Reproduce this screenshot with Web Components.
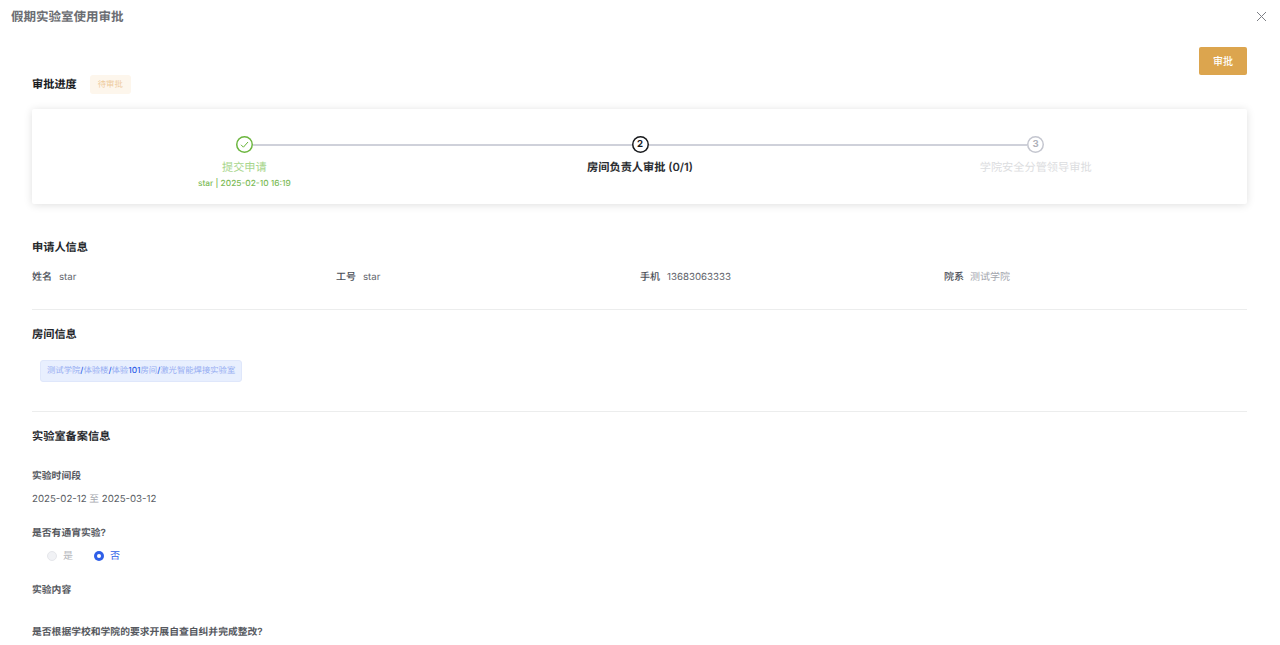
<!DOCTYPE html>
<html lang="zh">
<head>
<meta charset="utf-8">
<title>假期实验室使用审批</title>
<style>
  html, body { margin: 0; height: 100%; background: #fff; overflow: hidden; }
  body { font-family: Inter, "Noto Sans CJK SC", sans-serif; font-size: 10px; color: #4b4f58; text-rendering: geometricPrecision; }
</style>
</head>
<body>
<approval-page>
  <section-block title-text="申请人信息" style="height:70px">
    <info-row>
      <info-item label="姓名">star</info-item>
      <info-item label="工号">star</info-item>
      <info-item label="手机">13683063333</info-item>
      <info-item label="院系" muted>测试学院</info-item>
    </info-row>
  </section-block>
  <section-block title-text="房间信息" style="height:85px">
    <room-tag><span>测试学院</span><b>/</b><span>体验楼</span><b>/</b><span>体验</span><b>101</b><span>房间</span><b>/</b><span>激光智能焊接实验室</span></room-tag>
  </section-block>
  <section-block title-text="实验室备案信息" last>
    <form-field label="实验时间段" style="height:57px;margin-top:26px"><span>2025-02-12 <span style="color:#a3a6ad">至</span> 2025-03-12</span></form-field>
    <form-field label="是否有通宵实验?" style="height:57px">
      <radio-choice label="是" disabled></radio-choice>
      <radio-choice label="否" checked></radio-choice>
    </form-field>
    <form-field label="实验内容" style="height:42px"></form-field>
    <form-field label="是否根据学校和学院的要求开展自查自纠并完成整改?"></form-field>
  </section-block>
</approval-page>

<script>
class ApprovalPage extends HTMLElement {
  constructor() {
    super();
    this.attachShadow({ mode: 'open' });
    this.shadowRoot.innerHTML = `
      <style>
        :host { display: block; height: 645px; overflow: hidden; }
        header { height: 33px; display: flex; align-items: center; justify-content: space-between; padding: 0 13px 0 11px; }
        h1 { margin: 0 0 2px; font-size: 12.5px; font-weight: 600; color: #6b6d72; }
        .close { width: 11px; height: 11px; display: block; }
        main { padding: 0 33px 0 32px; }
        .actions { display: flex; justify-content: flex-end; padding-top: 14px; height: 28px; }
        button { width: 48px; height: 28px; border: 0; border-radius: 2px; background: #dca54e; color: #fff; font: inherit; font-size: 10px; font-weight: 500; padding: 0 0 2px; }
        .progress { display: flex; align-items: center; height: 19px; gap: 13px; }
        h2 { margin: 0 0 2px; font-size: 11.2px; font-weight: 600; color: #17191c; }
        .tag { width: 41px; height: 19px; line-height: 20px; text-align: center; background: #fdf6ec; border-radius: 3px; color: #eecb9c; font-size: 8.4px; }
        .card { display: flex; height: 95px; margin: 15px 0 35px; padding: 0 13.5px 0 14.5px; box-sizing: border-box; background: #fff; border-radius: 2px; box-shadow: 0 1px 8px rgba(0,0,0,.13); }
      </style>
      <header>
        <h1>假期实验室使用审批</h1>
        <svg class="close" viewBox="0 0 11 11" fill="none" stroke="#7d7f85" stroke-width="1"><path d="M1 1l9 9M10 1l-9 9"/></svg>
      </header>
      <main>
        <div class="actions"><button>审批</button></div>
        <div class="progress"><h2>审批进度</h2><span class="tag">待审批</span></div>
        <div class="card">
          <approval-step state="done" text="提交申请" sub="star | 2025-02-10 16:19" first></approval-step>
          <approval-step state="current" num="2" text="房间负责人审批 (0/1)"></approval-step>
          <approval-step state="wait" num="3" text="学院安全分管领导审批" last></approval-step>
        </div>
        <slot></slot>
      </main>`;
  }
}

class ApprovalStep extends HTMLElement {
  constructor() {
    super();
    this.attachShadow({ mode: 'open' });
  }
  connectedCallback() {
    const state = this.getAttribute('state');
    const inner = state === 'done'
      ? '<svg width="9" height="9" viewBox="0 0 9 9" fill="none" stroke="#67b437" stroke-width="1"><path d="M1 4.8l2.4 2.4L8 2"/></svg>'
      : this.getAttribute('num');
    const left = this.hasAttribute('first') ? 'none' : '';
    const right = this.hasAttribute('last') ? 'none' : '';
    const sub = this.getAttribute('sub');
    this.shadowRoot.innerHTML = `
      <style>
        :host { display: block; flex: 1 1 0; min-width: 0; text-align: center; padding-top: 27px; }
        .head { display: flex; align-items: center; height: 17px; }
        .line { flex: 1; height: 2px; background: #cfd1da; }
        .line.none { background: transparent; }
        .dot { width: 17px; height: 17px; box-sizing: border-box; border-radius: 50%; box-shadow: inset 0 0 0 1.5px var(--ring); display: flex; align-items: center; justify-content: center; font-size: 9.6px; font-weight: 700; }
        .text { margin-top: 6px; height: 16px; line-height: 16px; font-size: 11.2px; }
        .sub { margin-top: 3px; font-size: 8.35px; line-height: 12px; font-weight: 500; color: #7dbb57; }
        :host([state=done]) .dot { --ring: #6cb63f; }
        :host([state=done]) .text { color: #a9d68e; }
        :host([state=current]) .dot { --ring: #17191c; color: #17191c; }
        :host([state=current]) .text { color: #2a2c30; font-weight: 600; }
        :host([state=wait]) .dot { --ring: #c4c6cf; color: #b0b2ba; }
        :host([state=wait]) .text { color: #dcdde0; }
      </style>
      <div class="head"><span class="line ${left}"></span><span class="dot">${inner}</span><span class="line ${right}"></span></div>
      <div class="text">${this.getAttribute('text')}</div>
      ${sub ? `<div class="sub">${sub}</div>` : ''}`;
  }
}

class SectionBlock extends HTMLElement {
  constructor() {
    super();
    this.attachShadow({ mode: 'open' });
  }
  connectedCallback() {
    this.shadowRoot.innerHTML = `
      <style>
        :host { display: block; margin-bottom: 16px; border-bottom: 1px solid #eceded; }
        :host([last]) { border-bottom: 0; margin: 0; }
        h3 { margin: 0; height: 16px; line-height: 16px; font-size: 11.2px; font-weight: 600; color: #26282c; }
      </style>
      <h3>${this.getAttribute('title-text')}</h3>
      <slot></slot>`;
  }
}

class InfoRow extends HTMLElement {
  constructor() {
    super();
    this.attachShadow({ mode: 'open' });
    this.shadowRoot.innerHTML = `
      <style>:host { display: grid; grid-template-columns: repeat(4, 304px); margin-top: 15px; line-height: 14px; }</style>
      <slot></slot>`;
  }
}

class InfoItem extends HTMLElement {
  constructor() {
    super();
    this.attachShadow({ mode: 'open' });
  }
  connectedCallback() {
    this.shadowRoot.innerHTML = `
      <style>
        :host { display: flex; align-items: baseline; gap: 7px; font-size: 9.7px; color: #62656c; }
        :host([muted]) { color: #a3a6ad; font-size: 10px; gap: 6px; }
        b { font-size: 10px; font-weight: 500; color: #4b4f58; }
      </style>
      <b>${this.getAttribute('label')}</b><span><slot></slot></span>`;
  }
}

class RoomTag extends HTMLElement {
  constructor() {
    super();
    this.attachShadow({ mode: 'open' });
    this.shadowRoot.innerHTML = `
      <style>
        :host { display: block; width: fit-content; margin: 18px 0 0 8px; padding: 0 6px; height: 22px; line-height: 21px; box-sizing: border-box; background: #e8effe; border: 1px solid #dfe7fb; border-radius: 3px; font-size: 8.33px; color: #2f5fe8; }
        ::slotted(span) { color: #97aef2; }
        ::slotted(b) { font-weight: 500; }
      </style>
      <slot></slot>`;
  }
}

class FormField extends HTMLElement {
  constructor() {
    super();
    this.attachShadow({ mode: 'open' });
  }
  connectedCallback() {
    this.shadowRoot.innerHTML = `
      <style>
        :host { display: block; font-size: 9.7px; color: #5c5f66; }
        .label { height: 14px; line-height: 14px; font-size: 9.8px; font-weight: 600; color: #55585e; }
        .value { display: flex; align-items: center; margin-top: 9px; line-height: 14px; gap: 21px; }
        :host([radio]) .value { padding-left: 15px; margin-top: 8px; }
      </style>
      <div class="label">${this.getAttribute('label')}</div>
      <div class="value"><slot></slot></div>`;
    if (this.querySelector('radio-choice')) this.setAttribute('radio', '');
  }
}

class RadioChoice extends HTMLElement {
  constructor() {
    super();
    this.attachShadow({ mode: 'open' });
  }
  connectedCallback() {
    this.shadowRoot.innerHTML = `
      <style>
        :host { display: inline-flex; align-items: center; gap: 6px; font-size: 10px; color: #2f5fe8; }
        :host([disabled]) { color: #b4b6bb; }
        i { width: 10px; height: 10px; border-radius: 50%; box-sizing: border-box; background: #2f5fe8; display: flex; align-items: center; justify-content: center; }
        i::after { content: ""; width: 4px; height: 4px; border-radius: 50%; background: #fff; }
        :host([disabled]) i { background: #f1f2f5; border: 1px solid #e6e7eb; }
        :host([disabled]) i::after { display: none; }
      </style>
      <i></i><span>${this.getAttribute('label')}</span>`;
  }
}

customElements.define('approval-page', ApprovalPage);
customElements.define('approval-step', ApprovalStep);
customElements.define('section-block', SectionBlock);
customElements.define('info-row', InfoRow);
customElements.define('info-item', InfoItem);
customElements.define('room-tag', RoomTag);
customElements.define('form-field', FormField);
customElements.define('radio-choice', RadioChoice);
</script>
</body>
</html>
